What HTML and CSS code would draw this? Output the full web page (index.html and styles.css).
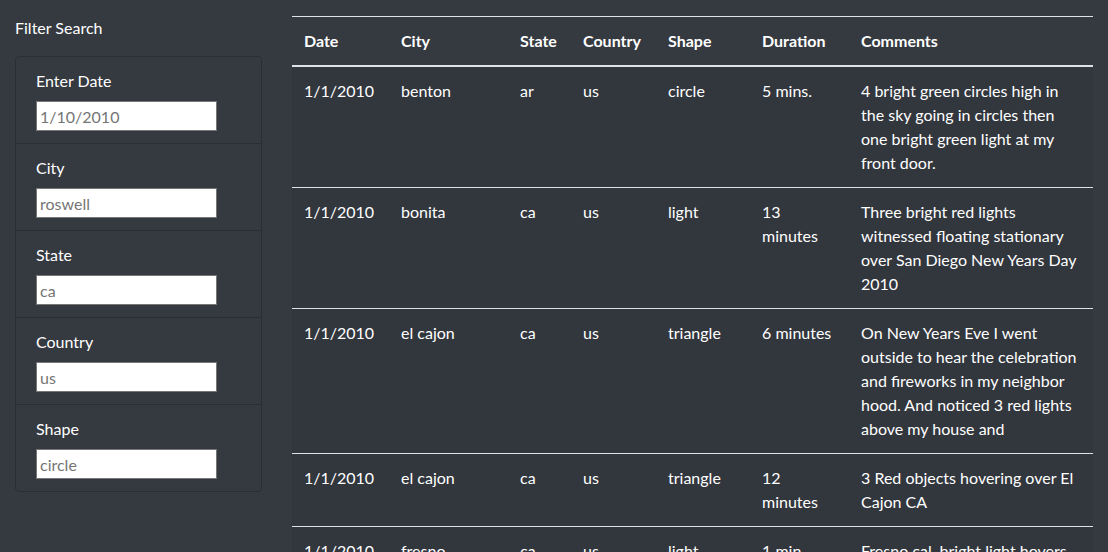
FILE: index.html
```html
<!DOCTYPE html>
<html lang="en">
<head>
<meta charset="utf-8">
<title>UFO Sightings</title>
<link rel="stylesheet" href="styles.css">
</head>
<body>
<div class="page">
  <aside class="sidebar">
    <div class="sidebar-title">Filter Search</div>
    <ul class="filters">
      <li class="filter-item">
        <label class="filter-label" for="datetime">Enter Date</label>
        <input class="filter-input" id="datetime" type="text" placeholder="1/10/2010">
      </li>
      <li class="filter-item">
        <label class="filter-label" for="city">City</label>
        <input class="filter-input" id="city" type="text" placeholder="roswell">
      </li>
      <li class="filter-item">
        <label class="filter-label" for="state">State</label>
        <input class="filter-input" id="state" type="text" placeholder="ca">
      </li>
      <li class="filter-item">
        <label class="filter-label" for="country">Country</label>
        <input class="filter-input" id="country" type="text" placeholder="us">
      </li>
      <li class="filter-item">
        <label class="filter-label" for="shape">Shape</label>
        <input class="filter-input" id="shape" type="text" placeholder="circle">
      </li>
    </ul>
  </aside>
  <main class="content">
    <table class="ufo-table">
      <colgroup>
        <col class="c-date"><col class="c-city"><col class="c-state"><col class="c-country"><col class="c-shape"><col class="c-duration"><col class="c-comments">
      </colgroup>
      <thead>
        <tr>
          <th>Date</th><th>City</th><th>State</th><th>Country</th><th>Shape</th><th>Duration</th><th>Comments</th>
        </tr>
      </thead>
      <tbody>
        <tr>
          <td>1/1/2010</td><td>benton</td><td>ar</td><td>us</td><td>circle</td><td>5 mins.</td>
          <td>4 bright green circles high in the sky going in circles then one bright green light at my front door.</td>
        </tr>
        <tr>
          <td>1/1/2010</td><td>bonita</td><td>ca</td><td>us</td><td>light</td><td>13 minutes</td>
          <td>Three bright red lights witnessed floating stationary over San Diego New Years Day 2010</td>
        </tr>
        <tr>
          <td>1/1/2010</td><td>el cajon</td><td>ca</td><td>us</td><td>triangle</td><td>6 minutes</td>
          <td>On New Years Eve I went outside to hear the celebration and fireworks in my neighbor hood. And noticed 3 red lights above my house and</td>
        </tr>
        <tr>
          <td>1/1/2010</td><td>el cajon</td><td>ca</td><td>us</td><td>triangle</td><td>12 minutes</td>
          <td>3 Red objects hovering over El Cajon CA</td>
        </tr>
        <tr>
          <td>1/1/2010</td><td>fresno</td><td>ca</td><td>us</td><td>light</td><td>1 min.</td>
          <td>Fresno cal. bright light hovers over the city and then disappears.</td>
        </tr>
      </tbody>
    </table>
  </main>
</div>
</body>
</html>
```
FILE: styles.css
```css
* { box-sizing: border-box; }

html, body {
  margin: 0;
  padding: 0;
  background: #353940;
  color: #ffffff;
  font-family: "Lato", "Liberation Sans", sans-serif;
  font-size: 16px;
  line-height: 24px;
  overflow: hidden;
}

.page {
  display: flex;
  padding-top: 16px;
}

.sidebar {
  flex: 0 0 277px;
  padding: 0 15px;
}

.sidebar-title {
  line-height: 24px;
  margin-bottom: 16px;
}

.filters {
  list-style: none;
  margin: 0;
  padding: 0;
  border: 1px solid #2b2f35;
  border-radius: 4px;
  width: 247px;
}

.filter-item {
  padding: 12px 20px;
  border-bottom: 1px solid #2b2f35;
}

.filter-item:last-child {
  border-bottom: none;
}

.filter-label {
  display: block;
  margin-bottom: 8px;
  line-height: 24px;
}

.filter-input {
  display: block;
  width: 181px;
  height: 30px;
  margin: 0;
  padding: 1px 3px;
  border: 1px solid #767676;
  background: #ffffff;
  font-family: inherit;
  font-size: 16px;
  color: #333;
}

.filter-input::placeholder {
  color: #757575;
  opacity: 1;
}

.content {
  flex: 1 1 auto;
  padding: 0 15px;
}

.ufo-table {
  width: 801px;
  border-collapse: collapse;
  table-layout: fixed;
  background: #32363d;
}

.c-date { width: 97px; }
.c-city { width: 119px; }
.c-state { width: 63px; }
.c-country { width: 85px; }
.c-shape { width: 94px; }
.c-duration { width: 99px; }
.c-comments { width: 244px; }

.ufo-table th,
.ufo-table td {
  padding: 12px;
  text-align: left;
  vertical-align: top;
  border-top: 1px solid #dee2e6;
  line-height: 24px;
}

.ufo-table th {
  font-weight: 700;
  background: #353940;
  border-bottom: 2px solid #dee2e6;
}

.ufo-table td {
  font-weight: 400;
}
```
